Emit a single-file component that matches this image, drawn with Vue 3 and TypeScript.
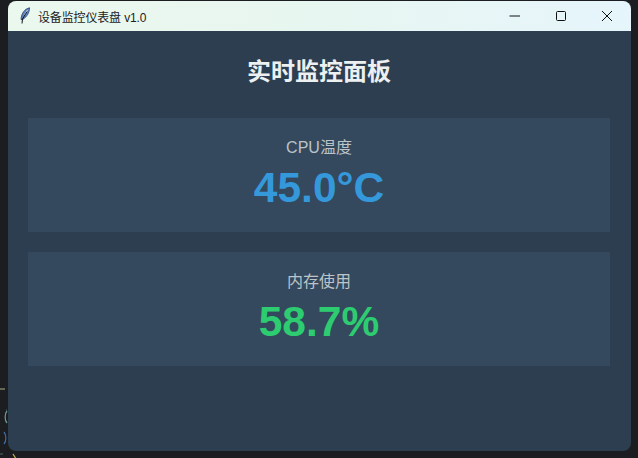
<script setup lang="ts">
const metrics = [
  { label: 'CPU温度', value: '45.0°C', tone: 'blue' },
  { label: '内存使用', value: '58.7%', tone: 'green' },
]
</script>

<template>
  <div class="desktop">
    <svg class="backdrop" width="30" height="80" viewBox="0 0 30 80">
      <path d="M0 11h5" stroke="#7d8a6a" stroke-width="2" opacity=".7" />
      <path d="M6 32h1" stroke="#8a94a0" stroke-width="1" opacity=".6" />
      <path d="M7 33c-2.500 3-2.500 9 0 12" fill="none" stroke="#6f9c8c" stroke-width="1.200" />
      <path d="M4 54c2.500 3 2.500 9 0 12" fill="none" stroke="#3f6fa8" stroke-width="1.200" />
      <path d="M13 76l2.500 4" fill="none" stroke="#c9b458" stroke-width="1.200" />
      <path d="M0 76h3" stroke="#6f9c8c" stroke-width="1" opacity=".6" />
    </svg>
    <div class="window">
      <header class="titlebar">
        <svg class="feather" width="12" height="18" viewBox="0 0 12 18">
          <path d="M10.500.800C6 2 2.500 5.500 2 12.500l2.200-.3C8 9.500 10.500 5.500 10.500.800Z" fill="#5f86c4" stroke="#2b3a66" stroke-width=".8" />
          <path d="M8.500 3 5.500 8" fill="none" stroke="#dce8f8" stroke-width="1" />
          <path d="M8 4.500 3.500 12 3 16.500" fill="none" stroke="#0f1422" stroke-width="1" />
        </svg>
        <span class="title">设备监控仪表盘 v1.0</span>
        <div class="controls">
          <svg width="12" height="12" viewBox="0 0 12 12"><path d="M.5 6h10.500" stroke="#111" stroke-width="1" /></svg>
          <svg width="12" height="12" viewBox="0 0 12 12"><rect x="1.500" y="1.500" width="9" height="9" rx="1" fill="none" stroke="#111" stroke-width="1" /></svg>
          <svg width="12" height="12" viewBox="0 0 12 12"><path d="M1 1l10 10M11 1 1 11" stroke="#111" stroke-width="1" /></svg>
        </div>
      </header>
      <main class="content">
        <h1 class="heading">实时监控面板</h1>
        <section v-for="m in metrics" :key="m.label" class="card">
          <div class="label">{{ m.label }}</div>
          <div class="value" :class="m.tone">{{ m.value }}</div>
        </section>
      </main>
    </div>
  </div>
</template>

<style>
html, body { margin: 0; background: #1c1d20; overflow: hidden; }
</style>

<style scoped>
.desktop {
  position: relative;
  width: 638px;
  height: 458px;
  padding: 1px 7px 7px 8px;
  box-sizing: border-box;
  background: #1c1d20;
  font-family: "Liberation Sans", "Noto Sans CJK SC", sans-serif;
}
.backdrop {
  position: absolute;
  left: 0;
  top: 378px;
}
.window {
  position: relative;
  height: 450px;
  border-radius: 8px;
  overflow: hidden;
  background: #2c3e50;
  display: flex;
  flex-direction: column;
}
.titlebar {
  height: 30px;
  flex: none;
  display: flex;
  align-items: center;
  background: linear-gradient(90deg, #eaf8ee 0%, #e8f6f0 45%, #e6f5fb 100%);
  color: #222;
}
.feather { margin-left: 11px; }
.title { margin-left: 7px; font-size: 12px; letter-spacing: -0.15px; }
.controls {
  margin-left: auto;
  display: flex;
  gap: 34px;
  padding-right: 18px;
}
.content {
  flex: 1;
  padding: 0 21px 0 20px;
  display: flex;
  flex-direction: column;
}
.heading {
  margin: 27px 0 32px;
  height: 28px;
  line-height: 28px;
  text-align: center;
  font-size: 24px;
  font-weight: 700;
  color: #ecf0f1;
}
.card {
  height: 114px;
  margin-bottom: 20px;
  background: #34495e;
  text-align: center;
}
.label {
  margin-top: 20px;
  line-height: 20px;
  font-size: 16px;
  color: #bdc3c7;
}
.value {
  margin-top: 6px;
  line-height: 48px;
  font-size: 42.5px;
  font-weight: 700;
}
.blue { color: #3498db; }
.green { color: #2ecc71; }
</style>
